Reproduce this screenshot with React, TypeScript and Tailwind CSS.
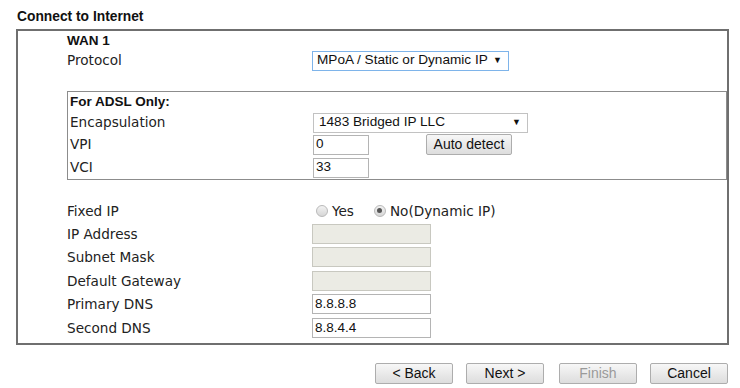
import React from 'react';

const verdana = { fontFamily: '"DejaVu Sans", Verdana, sans-serif' };

const Row = ({ label, h = 'h-[23.5px]', children }: { label: string; h?: string; children?: React.ReactNode }) => (
  <div className={`flex items-center ${h}`}>
    <div className="w-[245px] shrink-0 text-[13.6px] text-[#222]" style={verdana}>{label}</div>
    <div className="flex items-center">{children}</div>
  </div>
);

const TextBox = ({ value = '', w = 'w-[119px]', disabled = false }: { value?: string; w?: string; disabled?: boolean }) => (
  <div
    className={`${w} h-[20px] border border-[#b4b4b4] flex items-center pl-[2px] text-[13.5px] text-[#111] ${disabled ? 'bg-[#ebebe4] border-[#c8c8c0]' : 'bg-white'}`}
  >
    {value}
  </div>
);

const Radio = ({ checked }: { checked?: boolean }) => (
  <span className="w-[12px] h-[12px] rounded-full border border-[#b9b9b9] bg-gradient-to-b from-[#f2f2f2] to-[#d6d6d6] flex items-center justify-center">
    {checked && <span className="w-[5px] h-[5px] rounded-full bg-[#555]" />}
  </span>
);

const Btn = ({ label, disabled = false, className = '' }: { label: string; disabled?: boolean; className?: string }) => (
  <div
    className={`w-[78px] h-[21px] border border-[#adadad] rounded-[2px] bg-gradient-to-b from-[#f7f7f7] to-[#dddddd] flex items-center justify-center text-[14px] ${disabled ? 'text-[#9a9a9a]' : 'text-[#111]'} ${className}`}
  >
    {label}
  </div>
);

export default function App() {
  return (
    <div className="w-[740px] h-[388px] bg-white text-[#111]" style={{ fontFamily: '"Liberation Sans", Arial, sans-serif' }}>
      <div className="h-[29px] pl-[17px] pt-[9px] text-[13.8px] font-bold leading-[16px]">Connect to Internet</div>

      <div className="ml-[16px] w-[713px] h-[316px] border-2 border-[#6f6f6f] flex flex-col">
        <div className="pl-[49px] pt-[1px]">
          <div className="h-[18px] flex items-center text-[13.5px] font-bold">WAN 1</div>
          <Row label="Protocol" h="h-[21px]">
            <div className="w-[197px] h-[20px] border border-[#7eb4ea] bg-white flex items-center justify-between pl-[4px] pr-[6px] text-[13.6px]">
              <span>MPoA / Static or Dynamic IP</span>
              <span className="text-[9px]">▼</span>
            </div>
          </Row>
        </div>

        <div className="ml-[49px] mt-[20px] border border-[#8c8c8c] pl-[2px] h-[89px]">
          <div className="h-[20px] flex items-center text-[13.5px] font-bold">For ADSL Only:</div>
          <div className="flex items-center h-[21px]">
            <div className="w-[243px] shrink-0 text-[13.6px] text-[#222]" style={verdana}>Encapsulation</div>
            <div className="w-[215px] h-[20px] border border-[#c2c2c2] bg-white flex items-center justify-between pl-[5px] pr-[6px] text-[13.6px]">
              <span>1483 Bridged IP LLC</span>
              <span className="text-[9px]">▼</span>
            </div>
          </div>
          <div className="flex items-center h-[23px]">
            <div className="w-[243px] shrink-0 text-[13.6px] text-[#222]" style={verdana}>VPI</div>
            <TextBox value="0" w="w-[56px]" />
            <div className="ml-[57px] w-[86px] h-[21px] border border-[#adadad] rounded-[2px] bg-gradient-to-b from-[#f7f7f7] to-[#dddddd] flex items-center justify-center text-[14px]">
              Auto detect
            </div>
          </div>
          <div className="flex items-center h-[23px]">
            <div className="w-[243px] shrink-0 text-[13.6px] text-[#222]" style={verdana}>VCI</div>
            <TextBox value="33" w="w-[56px]" />
          </div>
        </div>

        <div className="pl-[49px] mt-[20px]">
          <Row label="Fixed IP" h="h-[22px]">
            <div className="flex items-center pl-[4px] text-[13.6px] text-[#222]" style={verdana}>
              <Radio />
              <span className="ml-[4px]">Yes</span>
              <span className="ml-[20px]"><Radio checked /></span>
              <span className="ml-[4px]">No(Dynamic IP)</span>
            </div>
          </Row>
          <Row label="IP Address"><TextBox disabled /></Row>
          <Row label="Subnet Mask"><TextBox disabled /></Row>
          <Row label="Default Gateway"><TextBox disabled /></Row>
          <Row label="Primary DNS"><TextBox value="8.8.8.8" /></Row>
          <Row label="Second DNS"><TextBox value="8.8.4.4" /></Row>
        </div>
      </div>

      <div className="w-[728px] mt-[18px] flex justify-end">
        <Btn label="< Back" />
        <Btn label="Next >" className="ml-[13px]" />
        <Btn label="Finish" disabled className="ml-[15px]" />
        <Btn label="Cancel" className="ml-[13px]" />
      </div>
    </div>
  );
}
